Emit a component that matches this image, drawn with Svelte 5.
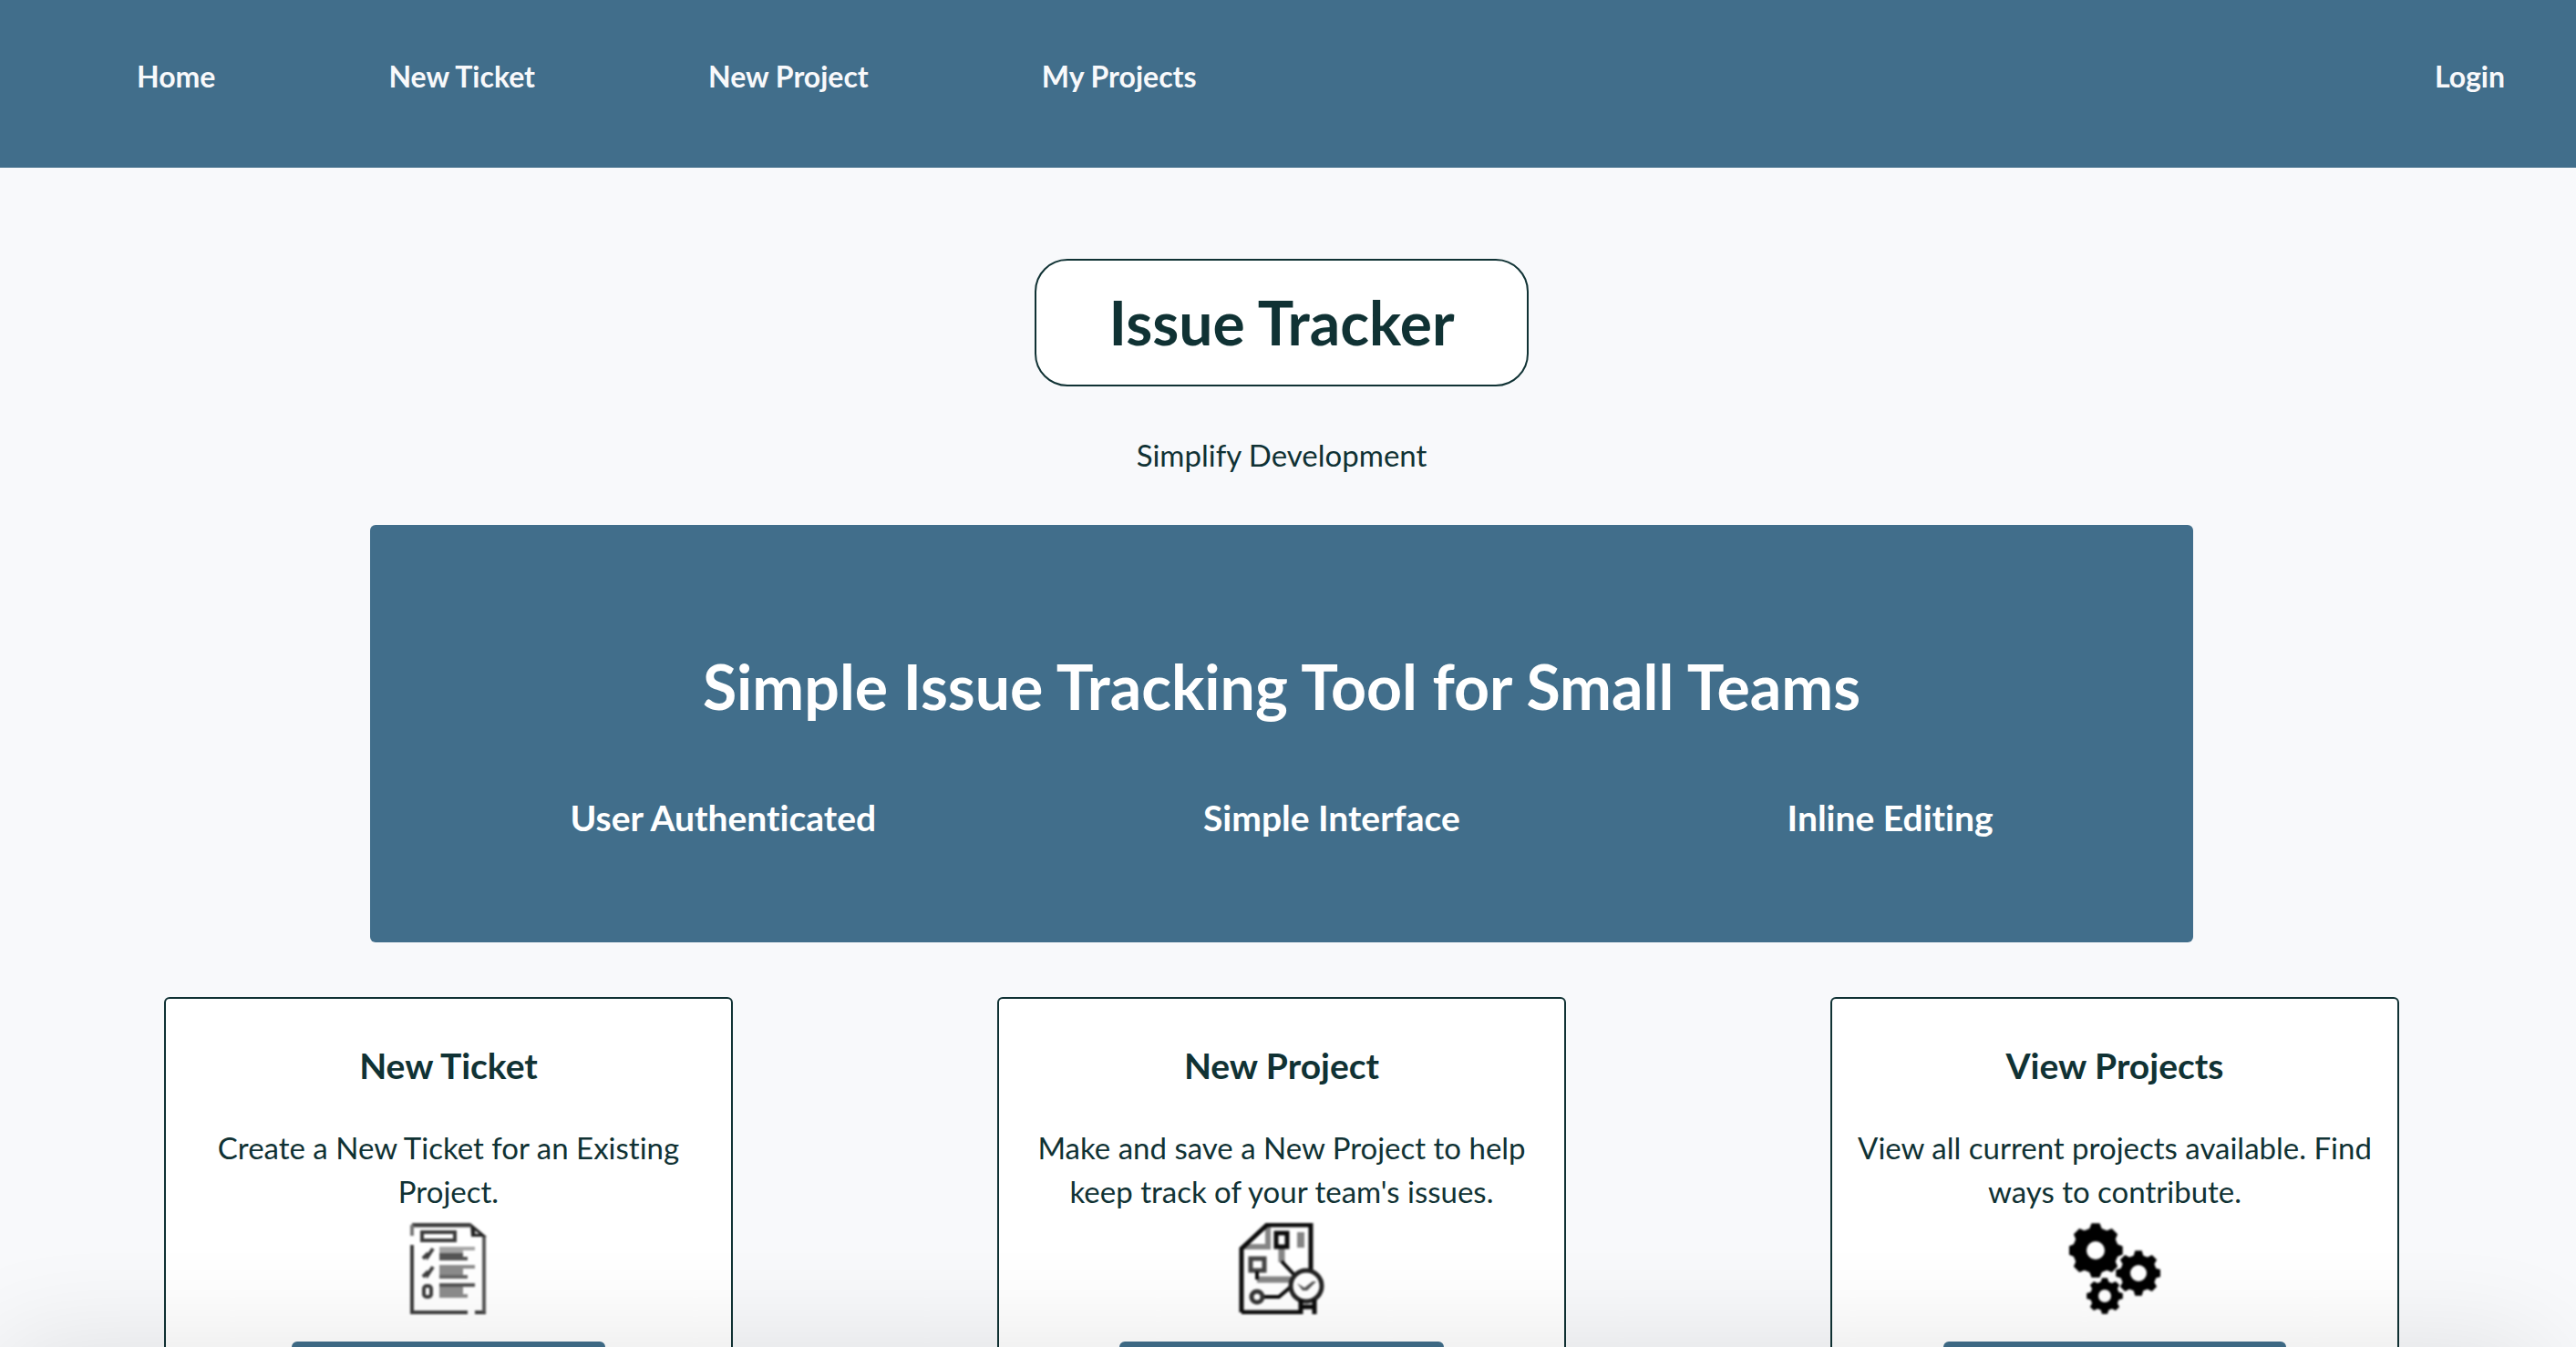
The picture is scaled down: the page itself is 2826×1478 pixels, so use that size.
<script>
  const links = ['Home', 'New Ticket', 'New Project', 'My Projects'];
  const features = ['User Authenticated', 'Simple Interface', 'Inline Editing'];
  const cards = [
    { title: 'New Ticket', text: 'Create a New Ticket for an Existing Project.', icon: 'ticket', action: 344 },
    { title: 'New Project', text: "Make and save a New Project to help keep track of your team's issues.", icon: 'project', action: 356 },
    { title: 'View Projects', text: 'View all current projects available. Find ways to contribute.', icon: 'gears', action: 376 },
  ];

  // Eight-toothed gear outline with a round hole, filled with the even-odd rule.
  function gear(cx, cy, tip, root, hole) {
    const pts = [];
    for (let i = 0; i < 8; i++) {
      const a = (i * Math.PI) / 4;
      for (const [d, r] of [[-0.27, root], [-0.15, tip], [0.15, tip], [0.27, root]]) {
        pts.push(`${(cx + r * Math.cos(a + d)).toFixed(1)} ${(cy + r * Math.sin(a + d)).toFixed(1)}`);
      }
    }
    return `M${pts.join('L')}ZM${cx - hole} ${cy}a${hole} ${hole} 0 1 0 ${2 * hole} 0a${hole} ${hole} 0 1 0 ${-2 * hole} 0Z`;
  }
  const gears = [gear(29, 30, 30, 25, 10), gear(76, 55, 25, 20, 9), gear(39, 80, 20, 16, 7)];
</script>

<div class="page">
  <header>
    <nav>
      {#each links as link}<a href="#top">{link}</a>{/each}
      <a class="login" href="#login">Login</a>
    </nav>
  </header>

  <main>
    <h1>Issue Tracker</h1>
    <p class="tagline">Simplify Development</p>

    <section class="hero">
      <h2>Simple Issue Tracking Tool for Small Teams</h2>
      <ul>
        {#each features as feature}<li>{feature}</li>{/each}
      </ul>
    </section>

    <section class="cards">
      {#each cards as card}
        <article>
          <h3>{card.title}</h3>
          <p>{card.text}</p>
          <svg class="icon" viewBox="0 0 100 100" aria-hidden="true">
            {#if card.icon === 'ticket'}
              <g fill="none" stroke="#3c3c3c" stroke-width="4">
                <path d="M10 2H74" stroke-width="5" />
                <path d="M10 2V14" stroke="#777" />
                <path d="M10 24V98H71M79 98H91" />
                <path d="M89 14V98" stroke="#5a5a5a" />
                <rect x="21" y="10" width="36" height="9" />
                <rect x="23" y="69" width="8" height="12" rx="3" />
                <path d="M22 39L26 35L27 37L33 28M22 59L26 55L27 57L33 48" />
              </g>
              <path d="M74 0L92 15H75Z" fill="#222" />
              <path d="M79 8L84 12H79Z" fill="#ccc" />
              <path d="M40 26H79V30H66V41H40Z" fill="#a5a5a5" />
              <path d="M40 33H66V37H71V41H40Z" fill="#555" />
              <path d="M40 46H79V50H66V57H71V61H40Z" fill="#8c8c8c" />
              <path d="M40 57H71V61H40Z" fill="#666" />
              <path d="M40 68H66V78H71V82H40Z" fill="#8c8c8c" />
              <path d="M40 66H79V70H40Z" fill="#555" />
            {:else if card.icon === 'project'}
              <path d="M35 3V26H9" fill="none" stroke="#858585" stroke-width="6" />
              <path d="M50 27V43M23 62H62" fill="none" stroke="#858585" stroke-width="7" />
              <path d="M67 10H75V27H67Z" fill="#858585" />
              <g fill="none" stroke="#0a0a0a" stroke-width="5">
                <path d="M6 98V28L34 2H82V52M6 98H70" />
                <path d="M44 11H56V26H44Z" />
                <path d="M16 39H31V52H16Z" stroke="#444" />
                <path d="M23 53V62M50 42L64 57M29 81H47L60 70" stroke-width="4" />
                <circle cx="23" cy="81" r="6" stroke="#333" />
                <circle cx="77" cy="69" r="17" fill="#fff" stroke="#222" />
                <path d="M71 84V100M86 84V100M70 92H87" />
              </g>
              <path d="M67 66L75 71L84 64H88L78 74H73Z" fill="#555" />
            {:else}
              {#each gears as d}<path {d} fill="#000" fill-rule="evenodd" />{/each}
            {/if}
          </svg>
          <button type="button" aria-label={card.title} style="width: {card.action}px"></button>
        </article>
      {/each}
    </section>
  </main>

  <div class="shade"></div>
</div>

<style>
  :global(body) {
    margin: 0;
    background: #f8f9fb;
  }
  .page {
    position: relative;
    height: 100vh;
    overflow: hidden;
    font-family: Lato, 'Open Sans', sans-serif;
    font-variant-ligatures: none;
    color: #103234;
  }
  h1, h2, h3, p, ul {
    margin: 0;
    padding: 0;
  }
  header {
    background: #416e8b;
    padding: 64px 78px 80px 150px;
  }
  nav {
    display: flex;
    gap: 190px;
  }
  a {
    color: #f8f9fb;
    font-size: 32px;
    font-weight: 700;
    line-height: 40px;
    text-decoration: none;
    white-space: nowrap;
  }
  .login {
    margin-left: auto;
  }
  main {
    padding: 100px 14px 0 0;
    text-align: center;
  }
  h1 {
    width: fit-content;
    margin: 0 auto;
    padding: 0 79px;
    border: 2px solid #103234;
    border-radius: 36px;
    background: #fff;
    font-size: 66px;
    line-height: 136px;
  }
  p {
    font-size: 33px;
    line-height: 48px;
  }
  .tagline {
    margin: 51px 0 53px;
  }
  .hero {
    margin: 0 406px;
    padding: 137px 40px 113px;
    border-radius: 6px;
    background: #416e8b;
    color: #fff;
  }
  h2 {
    font-size: 68px;
    line-height: 80px;
  }
  ul {
    display: flex;
    justify-content: space-around;
    margin-top: 80px;
    list-style: none;
  }
  li,
  h3 {
    font-size: 39px;
    font-weight: 700;
    line-height: 48px;
  }
  .cards {
    display: grid;
    grid-template-columns: repeat(3, 1fr);
    gap: 290px;
    padding: 60px 180px;
  }
  article {
    display: flex;
    flex-direction: column;
    align-items: center;
    padding: 49px 20px;
    border: 2px solid #103234;
    border-radius: 6px;
    background: #fff;
  }
  h3 {
    margin-bottom: 42px;
  }
  .icon {
    width: 100px;
    height: 100px;
    margin: 11px 0 30px;
    filter: blur(1px);
  }
  button {
    height: 72px;
    border: 0;
    border-radius: 6px;
    background: #416e8b;
  }
  /* Soft shadow rising from below the lower edge of the window. */
  .shade {
    position: absolute;
    top: 100%;
    left: 0;
    right: 36px;
    height: 200px;
    box-shadow: 0 0 120px rgba(0, 0, 0, 0.11);
    pointer-events: none;
  }
</style>
